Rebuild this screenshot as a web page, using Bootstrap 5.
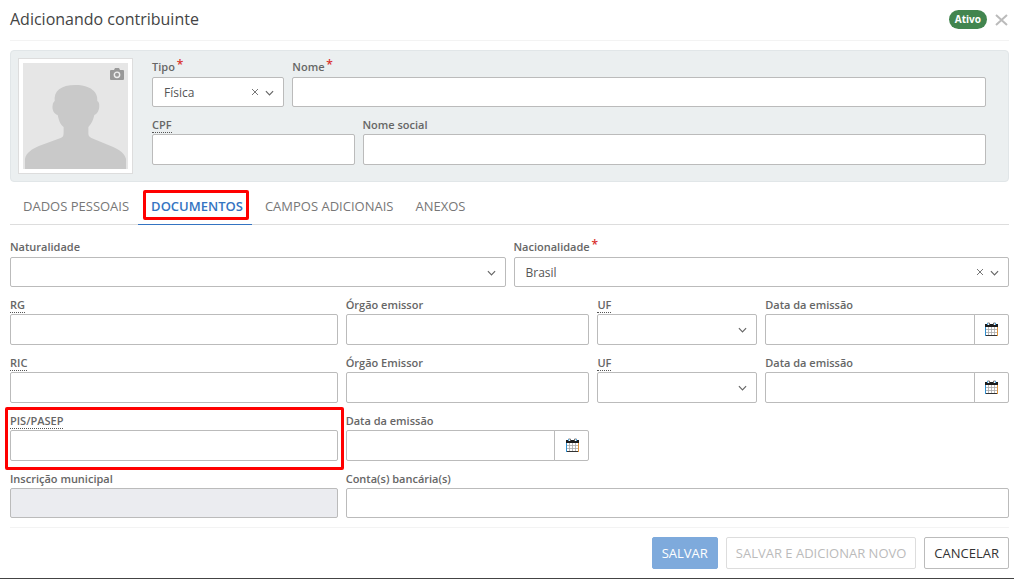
<!DOCTYPE html>
<html lang="pt-BR">
<head>
<meta charset="utf-8">
<meta name="viewport" content="width=device-width, initial-scale=1">
<title>Adicionando contribuinte</title>
<link href="https://cdn.jsdelivr.net/npm/bootstrap@5.3.0/dist/css/bootstrap.min.css" rel="stylesheet">
<style>
  body { font-family: "Open Sans", "Noto Sans", sans-serif; font-size: 12px; color: #555; background: #fff; }
  .page { padding: 0 5px 0 10px; border-bottom: 1px solid #444; }
  .page-head { height: 41px; padding-bottom: 2px; border-bottom: 1px solid #f3f3f3; }
  .page-title { font-size: 16px; line-height: 22px; font-weight: 400; color: #444; }
  .status { background: #42854f; font-size: 10px; line-height: 19px; padding: 0 6px; font-weight: 700; }
  .close-btn { width: 14px; height: 14px; }
  .panel { background: #ebeff0; border: 1px solid #e1e6e8; border-radius: 4px; padding: 7px 22px 7px 7px; gap: 19px; margin-top: 9px; }
  .photo { width: 115px; height: 116px; background: #fff; border: 1px solid #ddd; padding: 4px; }
  .photo-btn { top: 9px; right: 8px; width: 14px; height: 13px; }
  .fields { --bs-gutter-x: 8px; }
  .fields + .fields { margin-top: 8px; }
  .field-label { display: block; height: 19px; line-height: 18px; font-size: 11px; font-weight: 600; color: #666; white-space: nowrap; }
  .fields + .fields .field-label { line-height: 20px; }
  .field-label abbr { display: inline-block; height: 18px; text-decoration: none; border-bottom: 1px dotted #555; cursor: help; }
  .req { color: #d9302c; font-size: 12px; line-height: 1px; vertical-align: 2px; margin-left: -1px; }
  .form-control, .form-select { height: 31px; min-height: 0; padding: 0 11px; font-size: 12px; color: #555; background-color: #fff; border: 1px solid #bbb; border-radius: 2px; }
  .form-control:disabled { background: #ebecf0; }
  .form-select { padding-top: 2px; background-image: url("data:image/svg+xml,%3Csvg xmlns='http://www.w3.org/2000/svg' viewBox='0 0 10 6'%3E%3Cpath d='M1 1l4 4 4-4' fill='none' stroke='%23666' stroke-width='1.3'/%3E%3C/svg%3E"); background-size: 9px 6px; background-position: right 9px top 12px; }
  .short .form-control, .short .form-select { height: 30px; }
  .clear-btn { right: 24px; top: 10px; width: 10px; height: 10px; }
  .bare { display: block; padding: 0; border: 0; background: none; line-height: 0; }
  .date-btn { width: 35px; padding: 0 0 2px; border: 1px solid #bbb; border-radius: 2px; background: #fff; line-height: 0; }
  .tabs { height: 43px; border-bottom: 1px solid #ddd; margin-bottom: 13px; }
  .tabs .nav-link { position: relative; height: 43px; padding: 0 9px 0 13px; font-size: 13px; line-height: 49px; color: #777; border-bottom: 1px solid transparent; }
  .tabs .nav-link.active { color: #3474c2; font-weight: 600; border-color: #3474c2; }
  .mark-box { position: absolute; border: 3px solid #f00; border-radius: 2px; pointer-events: none; }
  .tab-box { inset: 8px 3px 4px 5px; }
  .field-box { inset: -4px -2px -9px -1px; }
  .page-foot { gap: 8px; margin-top: 9px; padding: 9px 0; border-top: 1px solid #f3f3f3; }
  .action { height: 32px; padding: 0 9px; font-size: 13px; line-height: 29px; border-radius: 2px; border: 1px solid #bbb; color: #333; background: #fff; }
  .action.save { color: #fff; background: #7eaadc; border-color: #7eaadc; opacity: 1; }
  .action.save-new { color: #bbb; background: #fff; border-color: #ddd; opacity: 1; }
</style>
</head>
<body>
<svg width="0" height="0" class="position-absolute" aria-hidden="true">
  <symbol id="calendar" viewBox="0 0 14 14">
    <path d="M1 5h13v9H1z" fill="#fff"/>
    <path d="M4.500 5v8M7.500 5v8M10.500 5v8M1 7.500h12M1 10.500h12" stroke="#aaa" stroke-width=".8"/>
    <path d="M1 13.500h13" stroke="#333"/>
    <path d="M1.500 5v9" stroke="#2f8fd0"/>
    <path d="M13.500 5v9" stroke="#e0953c"/>
    <path d="M1 2h13v3H1z" fill="#1c1c1c"/>
    <path d="M3.500 3V1h2v2M9.500 3V1h2v2" fill="#fff" stroke="#555" stroke-width=".8"/>
    <path d="M3.500 1v2M11.500 1v2" stroke="#4aa3e0"/>
  </symbol>
  <symbol id="cross" viewBox="0 0 10 10"><path d="M2 2l6 6M8 2l-6 6" fill="none" stroke="#777"/></symbol>
</svg>

<main class="page">
  <header class="page-head d-flex align-items-center justify-content-between">
    <h1 class="page-title m-0">Adicionando contribuinte</h1>
    <div class="d-flex align-items-center gap-2">
      <span class="badge rounded-pill status">Ativo</span>
      <button type="button" class="bare close-btn" aria-label="Fechar"><svg class="w-100 h-100" viewBox="0 0 14 14"><path d="M1 3l11 10M12 3L1 13" stroke="#bbb" stroke-width="2" fill="none"/></svg></button>
    </div>
  </header>

  <form>
    <section class="panel d-flex">
      <div class="photo flex-shrink-0 position-relative">
        <svg class="d-block w-100 h-100" viewBox="0 0 106 106" preserveAspectRatio="none" aria-hidden="true">
          <path d="M0 0h106v106H0z" fill="#e6e6e6"/>
          <path d="M2 106V96c1-6 7-10 14-13l22-8c3-1 3-3 3-7v-4c-4-3-5-8-6-12-4-1-6-6-5-10 0-2 1-3 2-4C31 28 38 22 53 22s23 7 22 16c2 1 2 3 2 5 0 4-2 8-5 9-1 5-3 9-6 12v5c0 3 0 4 3 6l22 9c7 3 12 7 13 12v10z" fill="#c9c9c9"/>
        </svg>
        <button type="button" class="bare photo-btn position-absolute" aria-label="Alterar foto"><svg class="w-100 h-100" viewBox="0 0 14 13"><path d="M1 2h3l1-2h4l1 2h3q1 0 1 1v8q0 1-1 1H1q-1 0-1-1V3q0-1 1-1z" fill="#999"/><circle cx="7" cy="6.800" r="2.700" fill="none" stroke="#eee" stroke-width="1.400"/></svg></button>
      </div>
      <div class="flex-grow-1">
        <div class="row fields short">
          <div class="col-2">
            <label class="field-label" for="tipo">Tipo <span class="req">*</span></label>
            <div class="position-relative">
              <select id="tipo" class="form-select"><option>Física</option></select>
              <button type="button" class="bare clear-btn position-absolute" aria-label="Limpar"><svg class="w-100 h-100"><use href="#cross"/></svg></button>
            </div>
          </div>
          <div class="col-10"><label class="field-label" for="nome">Nome <span class="req">*</span></label><input id="nome" class="form-control"></div>
        </div>
        <div class="row fields">
          <div class="col-3"><label class="field-label" for="cpf"><abbr>CPF</abbr></label><input id="cpf" class="form-control"></div>
          <div class="col-9"><label class="field-label" for="social">Nome social</label><input id="social" class="form-control"></div>
        </div>
      </div>
    </section>

    <nav class="nav tabs">
      <a class="nav-link" href="#">DADOS PESSOAIS</a>
      <a class="nav-link active" href="#" aria-current="page">DOCUMENTOS<span class="mark-box tab-box"></span></a>
      <a class="nav-link" href="#">CAMPOS ADICIONAIS</a>
      <a class="nav-link" href="#">ANEXOS</a>
    </nav>

    <div class="row fields short">
      <div class="col-6"><label class="field-label" for="natural">Naturalidade</label><select id="natural" class="form-select"><option></option></select></div>
      <div class="col-6">
        <label class="field-label" for="nacional">Nacionalidade <span class="req">*</span></label>
        <div class="position-relative">
          <select id="nacional" class="form-select"><option>Brasil</option></select>
          <button type="button" class="bare clear-btn position-absolute" aria-label="Limpar"><svg class="w-100 h-100"><use href="#cross"/></svg></button>
        </div>
      </div>
    </div>

    <div class="row fields">
      <div class="col-4"><label class="field-label" for="rg"><abbr>RG</abbr></label><input id="rg" class="form-control"></div>
      <div class="col-3"><label class="field-label" for="rg-orgao">Órgão emissor</label><input id="rg-orgao" class="form-control"></div>
      <div class="col-2"><label class="field-label" for="rg-uf"><abbr>UF</abbr></label><select id="rg-uf" class="form-select"><option></option></select></div>
      <div class="col-3">
        <label class="field-label" for="rg-data">Data da emissão</label>
        <div class="input-group flex-nowrap"><input id="rg-data" class="form-control"><button type="button" class="date-btn" aria-label="Calendário"><svg width="14" height="14"><use href="#calendar"/></svg></button></div>
      </div>
    </div>

    <div class="row fields">
      <div class="col-4"><label class="field-label" for="ric"><abbr>RIC</abbr></label><input id="ric" class="form-control"></div>
      <div class="col-3"><label class="field-label" for="ric-orgao">Órgão Emissor</label><input id="ric-orgao" class="form-control"></div>
      <div class="col-2"><label class="field-label" for="ric-uf"><abbr>UF</abbr></label><select id="ric-uf" class="form-select"><option></option></select></div>
      <div class="col-3">
        <label class="field-label" for="ric-data">Data da emissão</label>
        <div class="input-group flex-nowrap"><input id="ric-data" class="form-control"><button type="button" class="date-btn" aria-label="Calendário"><svg width="14" height="14"><use href="#calendar"/></svg></button></div>
      </div>
    </div>

    <div class="row fields">
      <div class="col-4 position-relative"><label class="field-label" for="pis"><abbr>PIS/PASEP</abbr></label><input id="pis" class="form-control"><span class="mark-box field-box"></span></div>
      <div class="col-3">
        <label class="field-label" for="pis-data">Data da emissão</label>
        <div class="input-group flex-nowrap"><input id="pis-data" class="form-control"><button type="button" class="date-btn" aria-label="Calendário"><svg width="14" height="14"><use href="#calendar"/></svg></button></div>
      </div>
    </div>

    <div class="row fields short">
      <div class="col-4"><label class="field-label" for="inscricao">Inscrição municipal</label><input id="inscricao" class="form-control" disabled></div>
      <div class="col-8"><label class="field-label" for="contas">Conta(s) bancária(s)</label><input id="contas" class="form-control"></div>
    </div>

    <footer class="page-foot d-flex justify-content-end">
      <button type="submit" class="btn action save" disabled>SALVAR</button>
      <button type="button" class="btn action save-new" disabled>SALVAR E ADICIONAR NOVO</button>
      <button type="button" class="btn action">CANCELAR</button>
    </footer>
  </form>
</main>
<script src="https://cdn.jsdelivr.net/npm/bootstrap@5.3.0/dist/js/bootstrap.bundle.min.js"></script>
</body>
</html>
